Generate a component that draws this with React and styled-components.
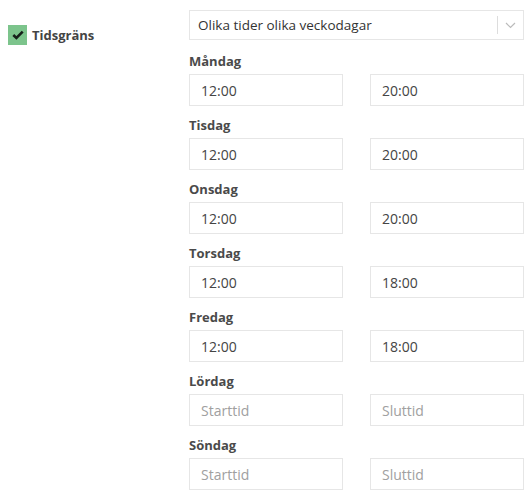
import styled, { createGlobalStyle } from "styled-components";

const GlobalStyle = createGlobalStyle`
  body {
    margin: 0;
    background: #fff;
    font-family: "Open Sans", "Liberation Sans", sans-serif;
  }
`;

const Page = styled.div`
  display: flex;
  padding-top: 10px;
  width: 531px;
  box-sizing: border-box;
`;

const Side = styled.div`
  width: 189px;
  padding: 15px 0 0 8px;
  box-sizing: border-box;
`;

const CheckRow = styled.label`
  display: flex;
  align-items: center;
  gap: 5px;
  font-size: 13px;
  font-weight: 700;
  color: #444;
`;

const Box = styled.span`
  width: 19px;
  height: 20px;
  flex: none;
  background: #7cc48c;
  display: flex;
  align-items: center;
  justify-content: center;
`;

const Main = styled.div`
  width: 335px;
`;

const Select = styled.div`
  height: 30px;
  border: 1px solid #e6e6e6;
  box-sizing: border-box;
  display: flex;
  align-items: center;
  padding-left: 8px;
  font-size: 13.5px;
  color: #333;
  margin-bottom: 12px;
`;

const SelectText = styled.span`
  flex: 1;
`;

const Divider = styled.span`
  width: 1px;
  height: 18px;
  background: #ddd;
`;

const Chevron = styled.span`
  width: 25px;
  display: flex;
  justify-content: center;
`;

const Day = styled.div`
  margin-bottom: 10px;
`;

const DayLabel = styled.div`
  font-size: 13px;
  line-height: 18px;
  font-weight: 700;
  color: #4a4a4a;
  margin-bottom: 4px;
`;

const Fields = styled.div`
  display: grid;
  grid-template-columns: 154px 154px;
  justify-content: space-between;
`;

const Input = styled.input`
  height: 32px;
  box-sizing: border-box;
  border: 1px solid #e6e6e6;
  padding: 0 11px;
  font-family: inherit;
  font-size: 14px;
  color: #444;
  outline: none;
  &::placeholder {
    color: #a0a0a0;
  }
`;

const days = [
  ["Måndag", "12:00", "20:00"],
  ["Tisdag", "12:00", "20:00"],
  ["Onsdag", "12:00", "20:00"],
  ["Torsdag", "12:00", "18:00"],
  ["Fredag", "12:00", "18:00"],
  ["Lördag", "", ""],
  ["Söndag", "", ""],
];

const App = () => {
  return (
    <Page>
      <GlobalStyle />
      <Side>
        <CheckRow>
          <Box>
            <svg width="12" height="10" viewBox="0 0 12 10">
              <path d="M1.3 5 L4.4 8 L10.7 1.7" fill="none" stroke="#16201a" strokeWidth="2.6" />
            </svg>
          </Box>
          Tidsgräns
        </CheckRow>
      </Side>
      <Main>
        <Select>
          <SelectText>Olika tider olika veckodagar</SelectText>
          <Divider />
          <Chevron>
            <svg width="11" height="7" viewBox="0 0 11 7">
              <path d="M1 1 L5.5 5.5 L10 1" fill="none" stroke="#bbb" strokeWidth="1.2" />
            </svg>
          </Chevron>
        </Select>
        {days.map(([name, start, end]) => (
          <Day key={name}>
            <DayLabel>{name}</DayLabel>
            <Fields>
              <Input defaultValue={start} placeholder="Starttid" />
              <Input defaultValue={end} placeholder="Sluttid" />
            </Fields>
          </Day>
        ))}
      </Main>
    </Page>
  );
};

export default App;
